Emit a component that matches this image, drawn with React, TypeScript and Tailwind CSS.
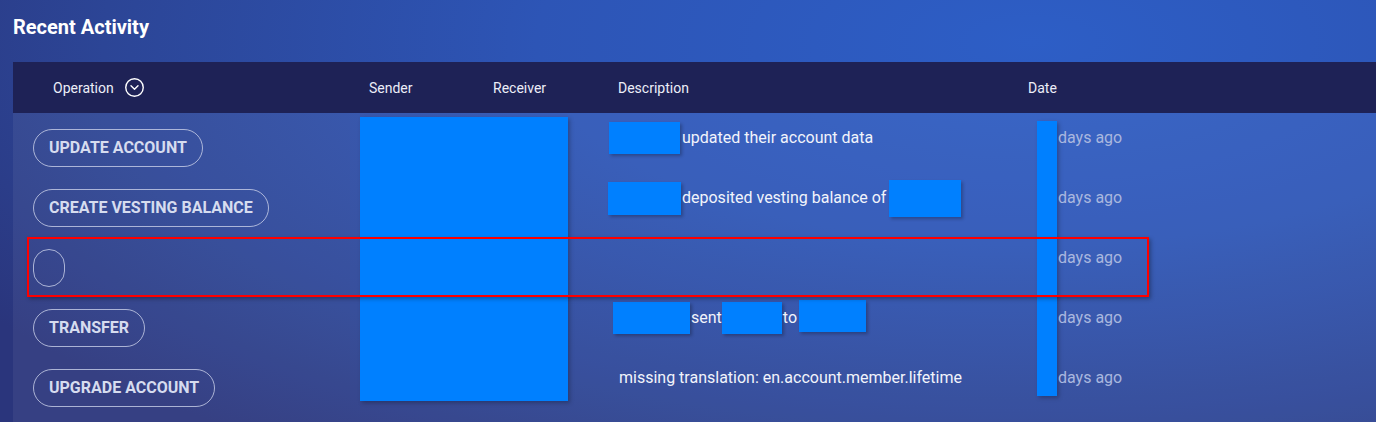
import { CircleChevronDown } from "lucide-react";

const rowStart = ["row-start-1", "row-start-2", "row-start-3", "row-start-4", "row-start-5"];

const ops = ["UPDATE ACCOUNT", "CREATE VESTING BALANCE", "", "TRANSFER", "UPGRADE ACCOUNT"];

function Redacted({ w, h, className = "" }: { w: string; h: string; className?: string }) {
  return <span className={`inline-block bg-[#0080ff] shadow-[2px_2px_3px_rgba(0,0,0,0.25)] ${w} ${h} ${className}`} />;
}

function Description({ i }: { i: number }) {
  if (i === 0)
    return (
      <>
        <Redacted w="w-[71px]" h="h-[32px]" className="ml-px" />
        <span className="ml-[2px]">updated their account data</span>
      </>
    );
  if (i === 1)
    return (
      <>
        <Redacted w="w-[73px]" h="h-[33px]" />
        <span className="ml-px">deposited vesting balance of</span>
        <Redacted w="w-[72px]" h="h-[37px]" className="ml-[3px]" />
      </>
    );
  if (i === 3)
    return (
      <>
        <Redacted w="w-[77px]" h="h-[32px]" className="ml-[5px]" />
        <span className="ml-px">sent</span>
        <Redacted w="w-[60px]" h="h-[32px]" />
        <span className="ml-px">to</span>
        <Redacted w="w-[67px]" h="h-[32px]" className="ml-[2px] -mt-[4px]" />
      </>
    );
  if (i === 4) return <span className="ml-[11px]">missing translation: en.account.member.lifetime</span>;
  return null;
}

export default function App() {
  return (
    <div
      className="min-h-[422px] h-[422px] overflow-hidden bg-[radial-gradient(ellipse_90%_120%_at_75%_10%,#2d5ec6_0%,#2d55b6_40%,#2c4596_75%,#2a357c_100%)] text-white"
      style={{ fontFamily: "Roboto, 'Noto Sans', sans-serif" }}
    >
      <h1 className="pl-[13px] pt-[14px] text-[20px] leading-[26px] font-bold">Recent Activity</h1>

      <div className="ml-[13px] mt-[22px] bg-white/[0.06]">
        <div className="grid h-[51px] grid-cols-[347px_124px_124px_420px_1fr] items-center bg-[#1e2256] text-sm text-[#eceef8]">
          <div className="flex items-center gap-[10px] pl-[40px]">
            <span>Operation</span>
            <CircleChevronDown size={21} strokeWidth={1.6} className="text-white" />
          </div>
          <div className="pl-[9px]">Sender</div>
          <div className="pl-[9px]">Receiver</div>
          <div className="pl-[10px]">Description</div>
          <div>Date</div>
        </div>

        <div className="grid grid-cols-[347px_124px_124px_420px_1fr] grid-rows-[repeat(5,60px)] pt-[5px] pb-[10px]">
          {ops.map((op, i) => (
            <div key={"op" + i} className={`col-start-1 ${rowStart[i]} flex items-center pl-5`}>
              <span className="flex h-[38px] min-w-[32px] items-center rounded-full border border-[#c9d0e8]/80 px-[15px] text-base font-bold text-[#d6dcef]">
                {op}
              </span>
            </div>
          ))}

          <div className="col-start-2 col-span-2 row-start-1 row-span-5 -mt-px h-[284px] w-[208px] self-start bg-[#0080ff] shadow-[2px_2px_4px_rgba(0,0,0,0.25)]" />

          {ops.map((_, i) => (
            <div key={"d" + i} className={`col-start-4 ${rowStart[i]} flex h-[40px] items-center self-start text-base text-[#f2f4fb] whitespace-nowrap`}>
              <Description i={i} />
            </div>
          ))}

          <div className="col-start-5 row-start-1 row-span-5 mt-[3px] ml-[9px] h-[275px] w-[20px] self-start bg-[#0080ff] shadow-[2px_2px_4px_rgba(0,0,0,0.25)]" />

          {ops.map((_, i) => (
            <div key={"t" + i} className={`col-start-5 ${rowStart[i]} flex h-[40px] items-center self-start pl-[30px] text-base text-[#a9b7df]`}>
              days ago
            </div>
          ))}

          <div className="pointer-events-none z-10 col-start-1 col-span-5 row-start-3 -mt-px ml-[14px] h-[60px] w-[1122px] border-2 border-[#ff0000] shadow-[2px_2px_4px_rgba(0,0,0,0.3)]" />
        </div>
      </div>
    </div>
  );
}
